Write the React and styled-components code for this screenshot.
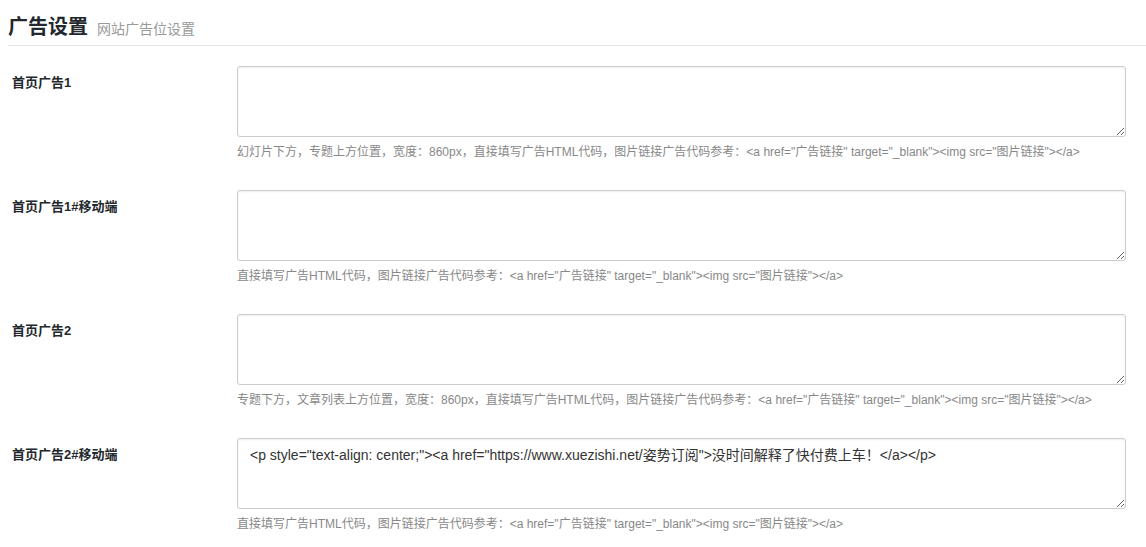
import React from "react";
import styled, { createGlobalStyle } from "styled-components";

const Global = createGlobalStyle`
  html, body { margin: 0; padding: 0; background: #fff; }
  body {
    font-family: "Liberation Sans", Arial, "Noto Sans CJK SC", sans-serif;
    color: #333;
  }
`;

const Page = styled.div`
  padding: 0 20px 0 0;
`;

const Header = styled.div`
  display: flex;
  align-items: baseline;
  gap: 9px;
  margin-left: 8px;
  margin-right: -20px;
  padding: 16px 0 7px;
  border-bottom: 1px solid #e8e8e8;
`;

const Title = styled.h2`
  margin: 0;
  font-size: 20px;
  line-height: 22px;
  font-weight: 700;
  color: #23282d;
`;

const Sub = styled.span`
  font-size: 14px;
  color: #999;
`;

const Form = styled.div`
  display: flex;
  flex-direction: column;
  gap: 30px;
  padding-top: 20px;
`;

const Row = styled.div`
  display: flex;
`;

const Label = styled.div`
  width: 237px;
  padding: 9px 0 0 12px;
  box-sizing: border-box;
  font-size: 13px;
  font-weight: 700;
  color: #23282d;
  line-height: 16px;
  flex-shrink: 0;
`;

const Field = styled.div`
  flex: 1;
  display: flex;
  flex-direction: column;
  gap: 7px;
`;

const Area = styled.textarea`
  display: block;
  width: 100%;
  height: 71px;
  box-sizing: border-box;
  border: 1px solid #ccc;
  border-radius: 3px;
  box-shadow: inset 0 1px 2px rgba(0, 0, 0, 0.07);
  padding: 6px 12px;
  font-family: "Liberation Sans", Arial, "Noto Sans CJK SC", sans-serif;
  font-size: 14px;
  line-height: 20px;
  color: #333;
  margin: 0;
`;

const Help = styled.p`
  margin: 0;
  font-size: 12px;
  line-height: 16px;
  color: #888;
`;

const code = '<a href="广告链接" target="_blank"><img src="图片链接"></a>';

const rows = [
  {
    label: "首页广告1",
    help: "幻灯片下方，专题上方位置，宽度：860px，直接填写广告HTML代码，图片链接广告代码参考：" + code,
    value: "",
  },
  {
    label: "首页广告1#移动端",
    help: "直接填写广告HTML代码，图片链接广告代码参考：" + code,
    value: "",
  },
  {
    label: "首页广告2",
    help: "专题下方，文章列表上方位置，宽度：860px，直接填写广告HTML代码，图片链接广告代码参考：" + code,
    value: "",
  },
  {
    label: "首页广告2#移动端",
    help: "直接填写广告HTML代码，图片链接广告代码参考：" + code,
    value:
      '<p style="text-align: center;"><a href="https://www.xuezishi.net/姿势订阅">没时间解释了快付费上车！</a></p>',
  },
];

export default function App() {
  return (
    <>
      <Global />
      <Page>
        <Header>
          <Title>广告设置</Title>
          <Sub>网站广告位设置</Sub>
        </Header>
        <Form>
          {rows.map((r) => (
            <Row key={r.label}>
              <Label>{r.label}</Label>
              <Field>
                <Area defaultValue={r.value} />
                <Help>{r.help}</Help>
              </Field>
            </Row>
          ))}
        </Form>
      </Page>
    </>
  );
}
